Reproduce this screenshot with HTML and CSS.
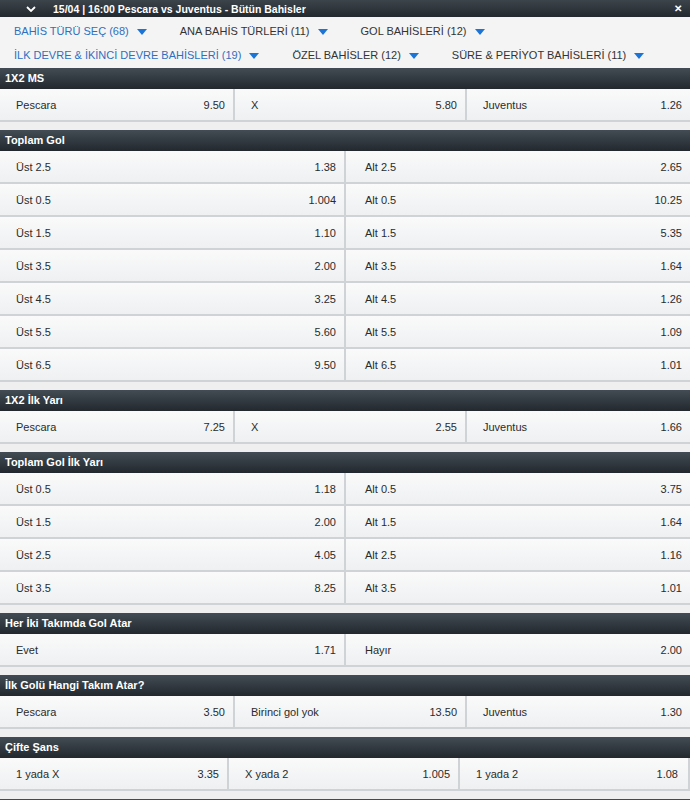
FILE: index.html
```html
<!DOCTYPE html>
<html lang="tr">
<head>
  <meta charset="UTF-8">
  <title>Pescara vs Juventus - Bütün Bahisler</title>
  <link rel="stylesheet" href="styles.css">
</head>
<body>
  <div class="topbar">
    <svg class="chevron" width="10" height="6" viewBox="0 0 10 6"><path d="M1 1l4 4 4-4" fill="none" stroke="#fff" stroke-width="1.8"/></svg>
    <span class="match-title">15/04 | 16:00 Pescara vs Juventus - Bütün Bahisler</span>
    <span class="close">&#x2715;</span>
  </div>

  <div class="filters">
    <span class="filter active">BAHİS TÜRÜ SEÇ (68)<i class="caret"></i></span>
    <span class="filter">ANA BAHİS TÜRLERİ (11)<i class="caret"></i></span>
    <span class="filter">GOL BAHİSLERİ (12)<i class="caret"></i></span>
    <span class="filter active">İLK DEVRE &amp; İKİNCİ DEVRE BAHİSLERİ (19)<i class="caret"></i></span>
    <span class="filter">ÖZEL BAHİSLER (12)<i class="caret"></i></span>
    <span class="filter">SÜRE &amp; PERİYOT BAHİSLERİ (11)<i class="caret"></i></span>
  </div>

  <div class="market">
    <div class="market-title">1X2 MS</div>
    <div class="odds-row cols-3">
      <div class="odd"><span>Pescara</span><span>9.50</span></div>
      <div class="odd"><span>X</span><span>5.80</span></div>
      <div class="odd"><span>Juventus</span><span>1.26</span></div>
    </div>
  </div>

  <div class="market">
    <div class="market-title">Toplam Gol</div>
    <div class="odds-row cols-2">
      <div class="odd"><span>Üst 2.5</span><span>1.38</span></div>
      <div class="odd"><span>Alt 2.5</span><span>2.65</span></div>
    </div>
    <div class="odds-row cols-2">
      <div class="odd"><span>Üst 0.5</span><span>1.004</span></div>
      <div class="odd"><span>Alt 0.5</span><span>10.25</span></div>
    </div>
    <div class="odds-row cols-2">
      <div class="odd"><span>Üst 1.5</span><span>1.10</span></div>
      <div class="odd"><span>Alt 1.5</span><span>5.35</span></div>
    </div>
    <div class="odds-row cols-2">
      <div class="odd"><span>Üst 3.5</span><span>2.00</span></div>
      <div class="odd"><span>Alt 3.5</span><span>1.64</span></div>
    </div>
    <div class="odds-row cols-2">
      <div class="odd"><span>Üst 4.5</span><span>3.25</span></div>
      <div class="odd"><span>Alt 4.5</span><span>1.26</span></div>
    </div>
    <div class="odds-row cols-2">
      <div class="odd"><span>Üst 5.5</span><span>5.60</span></div>
      <div class="odd"><span>Alt 5.5</span><span>1.09</span></div>
    </div>
    <div class="odds-row cols-2">
      <div class="odd"><span>Üst 6.5</span><span>9.50</span></div>
      <div class="odd"><span>Alt 6.5</span><span>1.01</span></div>
    </div>
  </div>

  <div class="market">
    <div class="market-title">1X2 İlk Yarı</div>
    <div class="odds-row cols-3">
      <div class="odd"><span>Pescara</span><span>7.25</span></div>
      <div class="odd"><span>X</span><span>2.55</span></div>
      <div class="odd"><span>Juventus</span><span>1.66</span></div>
    </div>
  </div>

  <div class="market">
    <div class="market-title">Toplam Gol İlk Yarı</div>
    <div class="odds-row cols-2">
      <div class="odd"><span>Üst 0.5</span><span>1.18</span></div>
      <div class="odd"><span>Alt 0.5</span><span>3.75</span></div>
    </div>
    <div class="odds-row cols-2">
      <div class="odd"><span>Üst 1.5</span><span>2.00</span></div>
      <div class="odd"><span>Alt 1.5</span><span>1.64</span></div>
    </div>
    <div class="odds-row cols-2">
      <div class="odd"><span>Üst 2.5</span><span>4.05</span></div>
      <div class="odd"><span>Alt 2.5</span><span>1.16</span></div>
    </div>
    <div class="odds-row cols-2">
      <div class="odd"><span>Üst 3.5</span><span>8.25</span></div>
      <div class="odd"><span>Alt 3.5</span><span>1.01</span></div>
    </div>
  </div>

  <div class="market">
    <div class="market-title">Her İki Takımda Gol Atar</div>
    <div class="odds-row cols-2">
      <div class="odd"><span>Evet</span><span>1.71</span></div>
      <div class="odd"><span>Hayır</span><span>2.00</span></div>
    </div>
  </div>

  <div class="market">
    <div class="market-title">İlk Golü Hangi Takım Atar?</div>
    <div class="odds-row cols-3">
      <div class="odd"><span>Pescara</span><span>3.50</span></div>
      <div class="odd"><span>Birinci gol yok</span><span>13.50</span></div>
      <div class="odd"><span>Juventus</span><span>1.30</span></div>
    </div>
  </div>

  <div class="market">
    <div class="market-title">Çifte Şans</div>
    <div class="odds-row cols-3b">
      <div class="odd"><span>1 yada X</span><span>3.35</span></div>
      <div class="odd"><span>X yada 2</span><span>1.005</span></div>
      <div class="odd"><span>1 yada 2</span><span>1.08</span></div>
    </div>
  </div>

  <!-- next market header, only its top edge is in view -->
  <div class="market">
    <div class="market-title"></div>
  </div>
</body>
</html>
```

FILE: styles.css
```css
:root {
  --bar-top: #434c54;
  --bar-bottom: #22282e;
  --line: #d0d3d6;
  --text: #2b2b2b;
  --blue: #2f6fc0;
  --page: #efefef;
}

* {
  margin: 0;
  padding: 0;
  box-sizing: border-box;
}

body {
  font-family: "Liberation Sans", Arial, sans-serif;
  font-size: 11px;
  color: var(--text);
  background: var(--page);
  overflow: hidden;
}

.topbar {
  height: 17px;
  display: flex;
  align-items: center;
  padding: 0 8px 0 26px;
  background: linear-gradient(#3c444b, #23292e);
  color: #fff;
}

.chevron {
  margin-right: 17px;
}

.match-title {
  font-weight: bold;
  font-size: 10.5px;
  flex: 1;
}

.close {
  font-weight: bold;
  font-size: 10px;
}

.filters {
  display: flex;
  flex-wrap: wrap;
  column-gap: 33px;
  padding: 2px 14px 0;
  background: #f4f4f4;
  height: 51px;
  align-content: center;
  row-gap: 11px;
}

.filter {
  display: flex;
  align-items: center;
  color: #333;
  line-height: 13px;
}

.filter.active {
  color: var(--blue);
}

.caret {
  width: 0;
  height: 0;
  margin-left: 8px;
  border-left: 5px solid transparent;
  border-right: 5px solid transparent;
  border-top: 6px solid #1b74d6;
}

.market {
  margin-bottom: 8px;
}

.market-title {
  height: 21px;
  line-height: 21px;
  padding-left: 5px;
  background: linear-gradient(var(--bar-top), var(--bar-bottom));
  color: #fff;
  font-weight: bold;
  font-size: 11px;
}

.odds-row {
  display: grid;
  background: linear-gradient(#fafafa, #eef0f2);
  border-bottom: 2px solid var(--line);
}

.cols-2 {
  grid-template-columns: 344px 1fr;
}

.cols-2 .odd + .odd {
  padding-left: 19px;
}

.cols-3 {
  grid-template-columns: 233px 232px 1fr;
}

.cols-3b {
  grid-template-columns: 227px 231px 232px;
}

.odd {
  height: 31px;
  display: flex;
  align-items: center;
  justify-content: space-between;
  padding: 0 8px 0 16px;
}

.odd + .odd {
  border-left: 2px solid var(--line);
}

.cols-3b .odd:last-child {
  padding-right: 10px;
  border-right: 2px solid var(--line);
}
```
